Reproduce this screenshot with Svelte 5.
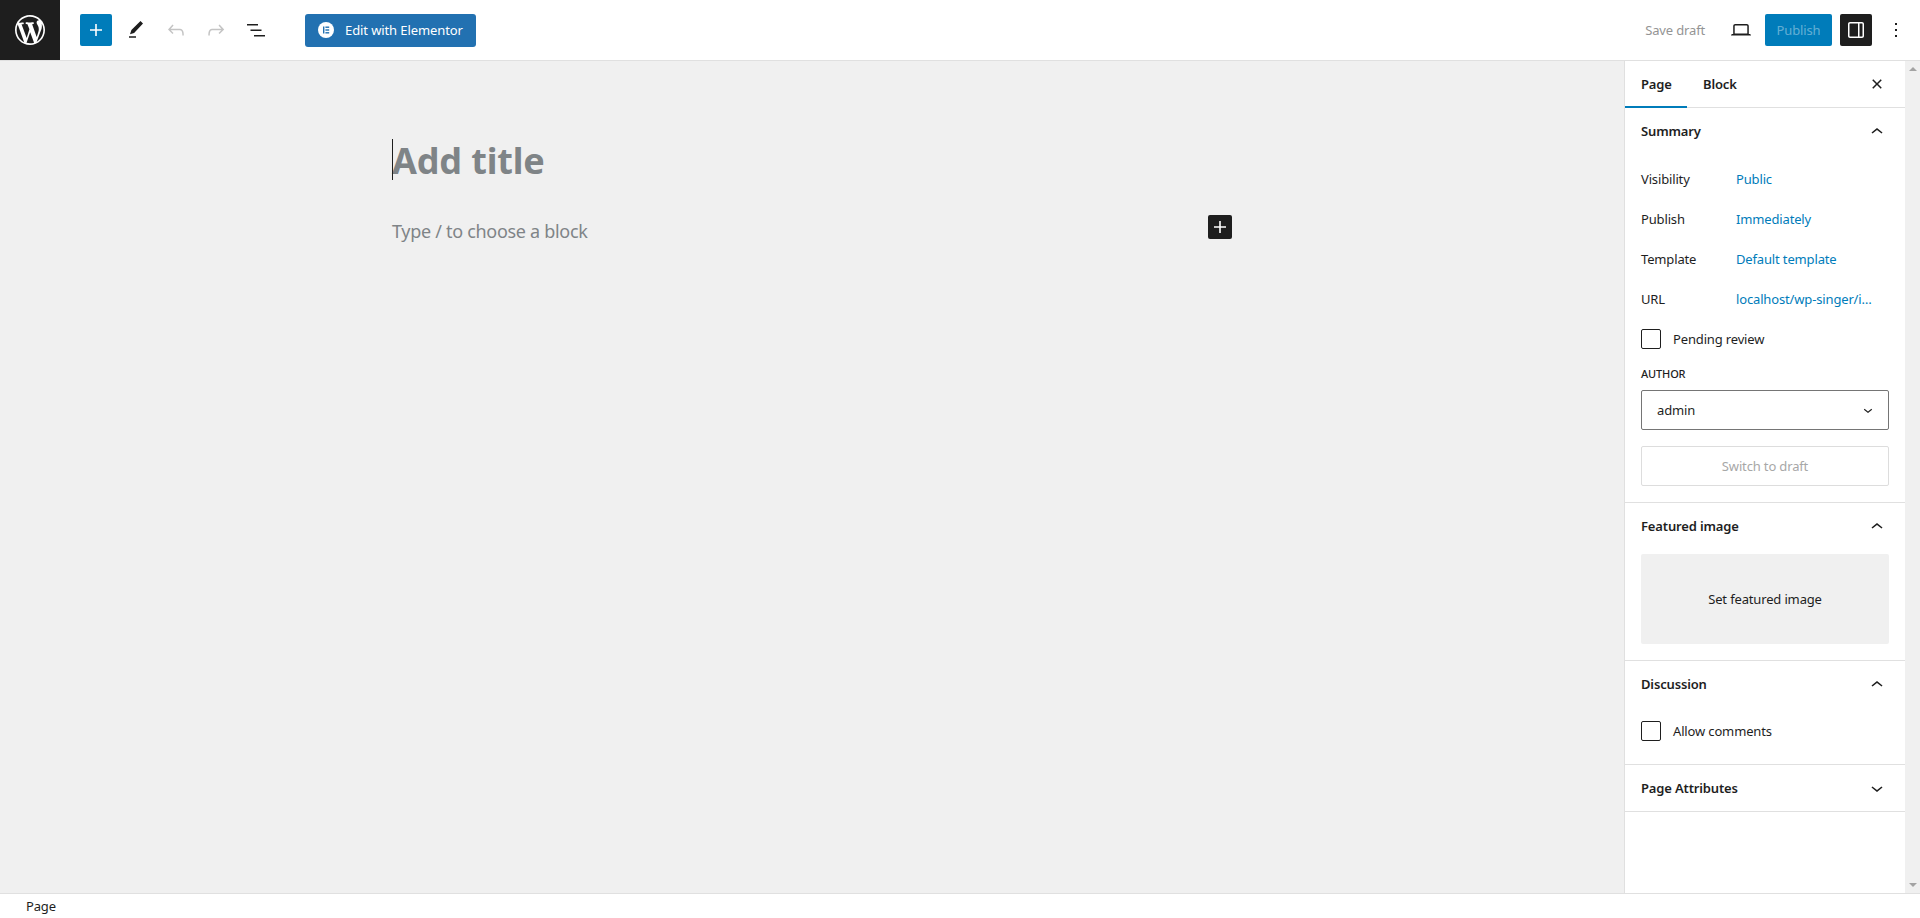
<script>
  const summaryRows = [
    ['Visibility', 'Public'],
    ['Publish', 'Immediately'],
    ['Template', 'Default template'],
    ['URL', 'localhost/wp-singer/i…']
  ];
  const chevronUp = 'M6.5 12.4L12 8l5.5 4.4-.9 1.2L12 10l-4.5 3.6-1-1.2z';
  const chevronDown = 'M17.5 11.6L12 16l-5.5-4.4.9-1.2L12 14l4.5-3.6 1 1.2z';
</script>

<div class="app">
  <header class="top">
    <a class="logo" href="#wp" aria-label="WordPress">
      <svg viewBox="-2 -2 24 24" width="36" height="36"><path fill="#fff" d="M20 10c0-5.51-4.49-10-10-10C4.48 0 0 4.49 0 10c0 5.52 4.48 10 10 10 5.51 0 10-4.48 10-10zM7.78 15.37L4.37 6.22c.55-.02 1.17-.08 1.17-.08.5-.06.44-1.13-.06-1.11 0 0-1.45.11-2.37.11-.18 0-.37 0-.58-.01C4.12 2.69 6.87 1.11 10 1.11c2.33 0 4.45.87 6.05 2.34-.68-.11-1.65.39-1.65 1.58 0 .74.45 1.36.9 2.1.35.61.55 1.36.55 2.46 0 1.49-1.4 5-1.4 5l-3.03-8.37c.54-.02.82-.17.82-.17.5-.05.44-1.25-.06-1.22 0 0-1.44.12-2.38.12-.87 0-2.33-.12-2.33-.12-.5-.03-.56 1.2-.06 1.22l.92.08 1.26 3.41zM17.41 10c.24-.64.74-1.87.43-4.25.7 1.29 1.05 2.71 1.05 4.25 0 3.29-1.73 6.24-4.4 7.78.97-2.59 1.94-5.2 2.92-7.78zM6.1 18.09C3.12 16.65 1.11 13.53 1.11 10c0-1.3.23-2.48.72-3.59C3.25 10.3 4.67 14.2 6.1 18.09zm4.03-6.63l2.58 6.98c-.86.29-1.76.45-2.71.45-.79 0-1.57-.11-2.29-.33.81-2.38 1.62-4.74 2.42-7.1z"/></svg>
    </a>
    <div class="tools">
      <button class="icon primary" aria-label="Add block"><svg viewBox="0 0 24 24" width="24" height="24"><path fill="#fff" d="M18 11.2h-5.2V6h-1.6v5.2H6v1.6h5.2V18h1.6v-5.2H18z"/></svg></button>
      <button class="icon" aria-label="Tools"><svg viewBox="0 0 24 24" width="24" height="24"><path fill="#1e1e1e" d="M19 5.5L16.5 3 7.4 12.1 6 16.2l4.1-1.3L19 5.5zM5 19.8h7v-1.5H5v1.5z"/></svg></button>
      <button class="icon" aria-label="Undo"><svg viewBox="0 0 24 24" width="24" height="24"><path fill="#c4c4c4" d="M18.3 11.7c-.6-.6-1.4-.9-2.3-.9H6.7l2.9-3.3-1.1-1-4.5 5L8.5 16l1-1-2.7-2.7H16c.5 0 .9.2 1.3.5 1 1 1 3.4 1 4.5v.3h1.5v-.2c0-1.5 0-4.3-1.5-5.7z"/></svg></button>
      <button class="icon" aria-label="Redo"><svg viewBox="0 0 24 24" width="24" height="24"><path fill="#c4c4c4" d="M15.6 6.5l-1.1 1 2.9 3.3H8c-.9 0-1.7.3-2.3.9-1.4 1.5-1.4 4.2-1.4 5.6v.2h1.5v-.3c0-1.1 0-3.5 1-4.5.3-.3.7-.5 1.3-.5h9.2L14.5 15l1.1 1.1 4.6-4.6-4.6-5z"/></svg></button>
      <button class="icon" aria-label="List view"><svg viewBox="0 0 24 24" width="24" height="24"><path fill="#1e1e1e" d="M3 6h11v1.5H3V6zm3.5 5.5h11V13h-11v-1.5zM21 17H10v1.5h11V17z"/></svg></button>
    </div>
    <button class="elementor">
      <svg viewBox="0 0 16 16" width="16" height="16"><circle cx="8" cy="8" r="8" fill="#fff"/><rect x="5" y="4.5" width="1.4" height="7" fill="#2271b1"/><rect x="7.4" y="4.5" width="3.8" height="1.4" fill="#2271b1"/><rect x="7.4" y="7.3" width="3.8" height="1.4" fill="#2271b1"/><rect x="7.4" y="10.1" width="3.8" height="1.4" fill="#2271b1"/></svg>
      <span>Edit with Elementor</span>
    </button>
    <div class="right">
      <span class="save">Save draft</span>
      <button class="icon" aria-label="Preview"><svg viewBox="0 0 24 24" width="24" height="24"><path fill="#1e1e1e" d="M20.5 16h-.7V8c0-1.1-.9-2-2-2H6.2c-1.1 0-2 .9-2 2v8h-.7c-.8 0-1.5.7-1.5 1.5h20c0-.8-.7-1.5-1.5-1.5zM5.7 8c0-.3.2-.5.5-.5h11.6c.3 0 .5.2.5.5v7.6H5.7V8z"/></svg></button>
      <button class="publish">Publish</button>
      <button class="icon dark" aria-label="Settings"><svg viewBox="0 0 24 24" width="24" height="24"><path fill="#fff" d="M18 4H6c-1.1 0-2 .9-2 2v12c0 1.1.9 2 2 2h12c1.1 0 2-.9 2-2V6c0-1.1-.9-2-2-2zm-4 14.5H6c-.3 0-.5-.2-.5-.5V6c0-.3.2-.5.5-.5h8v13zm4.5-.5c0 .3-.2.5-.5.5h-2.5v-13H18c.3 0 .5.2.5.5v12z"/></svg></button>
      <button class="icon" aria-label="Options"><svg viewBox="0 0 24 24" width="24" height="24"><path fill="#1e1e1e" d="M13 19h-2v-2h2v2zm0-6h-2v-2h2v2zm0-6h-2V5h2v2z"/></svg></button>
    </div>
  </header>

  <div class="main">
    <main class="canvas">
      <div class="doc">
        <h1 class="title"><span class="caret"></span>Add title</h1>
        <div class="para">
          <p>Type / to choose a block</p>
          <button class="inserter" aria-label="Add block"><svg viewBox="0 0 24 24" width="24" height="24"><path fill="#fff" d="M18 11.2h-5.2V6h-1.6v5.2H6v1.6h5.2V18h1.6v-5.2H18z"/></svg></button>
        </div>
      </div>
    </main>

    <aside class="side">
      <div class="tabs">
        <span class="tab active">Page</span>
        <span class="tab">Block</span>
        <button class="close" aria-label="Close"><svg viewBox="0 0 24 24" width="24" height="24"><path fill="#1e1e1e" d="M12 13.06l3.712 3.713 1.061-1.06L13.061 12l3.712-3.712-1.06-1.06L12 10.938 8.288 7.227l-1.061 1.06L10.939 12l-3.712 3.712 1.06 1.061L12 13.061z"/></svg></button>
      </div>

      <section class="panel">
        <div class="phead"><span>Summary</span><svg viewBox="0 0 24 24" width="24" height="24"><path fill="#1e1e1e" d={chevronUp}/></svg></div>
        <div class="pbody summary">
          {#each summaryRows as [k, v]}
            <div class="row"><span class="k">{k}</span><span class="v">{v}</span></div>
          {/each}
          <label class="check pending"><span class="box"></span>Pending review</label>
          <div class="author-label">AUTHOR</div>
          <div class="select"><span>admin</span><svg viewBox="0 0 24 24" width="18" height="18"><path fill="#1e1e1e" d={chevronDown}/></svg></div>
          <button class="switch">Switch to draft</button>
        </div>
      </section>

      <section class="panel">
        <div class="phead"><span>Featured image</span><svg viewBox="0 0 24 24" width="24" height="24"><path fill="#1e1e1e" d={chevronUp}/></svg></div>
        <div class="pbody featured"><div class="image">Set featured image</div></div>
      </section>

      <section class="panel">
        <div class="phead"><span>Discussion</span><svg viewBox="0 0 24 24" width="24" height="24"><path fill="#1e1e1e" d={chevronUp}/></svg></div>
        <div class="pbody discussion"><label class="check"><span class="box"></span>Allow comments</label></div>
      </section>

      <section class="panel last">
        <div class="phead"><span>Page Attributes</span><svg viewBox="0 0 24 24" width="24" height="24"><path fill="#1e1e1e" d={chevronDown}/></svg></div>
      </section>
    </aside>

    <div class="scroll">
      <span class="arrow up"></span>
      <span class="arrow down"></span>
    </div>
  </div>

  <footer class="foot">Page</footer>
</div>

<style>
  :global(body) { margin: 0; background: #fff; }
  * { box-sizing: border-box; }
  .app {
    height: 918px; display: flex; flex-direction: column; overflow: hidden;
    font-family: "Noto Sans", "Open Sans", sans-serif; font-size: 13px; color: #1e1e1e; letter-spacing: -0.15px;
  }
  button { font: inherit; letter-spacing: inherit; border: 0; padding: 0; background: none; color: inherit; }
  svg { display: block; flex: none; }

  .top { height: 61px; flex: none; display: flex; align-items: center; background: #fff; border-bottom: 1px solid #e0e0e0; }
  .logo { width: 60px; height: 60px; background: #1e1e1e; display: flex; align-items: center; justify-content: center; }
  .tools { display: flex; gap: 8px; margin-left: 20px; }
  .icon { width: 32px; height: 32px; display: flex; align-items: center; justify-content: center; border-radius: 2px; }
  .primary { background: #007cba; }
  .dark { background: #1e1e1e; }
  .elementor {
    margin-left: 33px; width: 171px; height: 33px; display: flex; align-items: center; gap: 11px; padding-left: 13px;
    background: #2271b1; color: #fff; border-radius: 3px; white-space: nowrap; letter-spacing: -0.1px;
  }
  .right { margin-left: auto; display: flex; align-items: center; gap: 8px; padding-right: 8px; }
  .save { color: #949494; margin-right: 12px; }
  .publish { width: 67px; height: 32px; background: #007cba; color: rgba(255,255,255,.4); border-radius: 2px; }

  .main { flex: 1; min-height: 0; display: flex; background: #f0f0f0; }
  .canvas { flex: 1; min-width: 0; }
  .doc { width: 840px; margin: 0 0 0 392px; padding-top: 51px; }
  .title { position: relative; margin: 0; height: 98px; font-size: 36px; line-height: 98px; font-weight: 700; color: #7f8487; letter-spacing: -0.15px; }
  .caret { position: absolute; left: 0; top: 27px; width: 1px; height: 41px; background: #1e1e1e; }
  .para { position: relative; height: 40px; }
  .para p { margin: 0; font-size: 18px; line-height: 42px; color: #7f8487; letter-spacing: -0.3px; }
  .inserter { position: absolute; left: 816px; top: 5px; width: 24px; height: 24px; background: #1e1e1e; border-radius: 2px; }

  .side { width: 281px; flex: none; background: #fff; border-left: 1px solid #e0e0e0; }
  .tabs { height: 47px; display: flex; align-items: stretch; border-bottom: 1px solid #e0e0e0; position: relative; font-weight: 600; }
  .tab { display: flex; align-items: center; padding: 0 16px; position: relative; }
  .tab.active { width: 62px; }
  .tab.active::after { content: ""; position: absolute; left: 0; right: 0; bottom: -1px; height: 2px; background: #007cba; }
  .close { position: absolute; right: 12px; top: 7px; width: 32px; height: 32px; display: flex; align-items: center; justify-content: center; }
  .panel { border-bottom: 1px solid #e0e0e0; }
  .phead { height: 47px; padding: 0 16px; display: flex; align-items: center; justify-content: space-between; font-weight: 600; }
  .phead span { position: relative; top: -1px; }
  .last .phead { height: 46px; }
  .last .phead span { top: 0; }
  .pbody { padding: 0 16px 16px; }
  .summary { padding-top: 4px; }
  .row { display: flex; height: 40px; align-items: center; }
  .k { width: 95px; }
  .v { color: #007cba; white-space: nowrap; }
  .check { display: flex; align-items: center; gap: 12px; height: 20px; }
  .box { width: 20px; height: 20px; border: 1px solid #1e1e1e; border-radius: 2px; background: #fff; flex: none; }
  .pending { margin-top: 10px; }
  .author-label { margin-top: 16px; font-size: 11px; font-weight: 500; line-height: 18px; }
  .select { margin-top: 7px; height: 40px; display: flex; align-items: center; justify-content: space-between; padding: 0 11px 0 15px; border: 1px solid #757575; border-radius: 2px; }
  .switch { display: block; margin-top: 16px; width: 100%; height: 40px; border: 1px solid #ddd; border-radius: 2px; color: #a7a7a7; background: #fff; }
  .featured { padding-top: 4px; }
  .image { height: 90px; display: flex; align-items: center; justify-content: center; background: #f0f0f0; border-radius: 2px; }
  .discussion { padding-top: 13px; padding-bottom: 23px; }

  .scroll { width: 15px; flex: none; display: flex; flex-direction: column; justify-content: space-between; align-items: center; padding: 6px 0; background: #f0f0f0; }
  .arrow { width: 0; height: 0; border-left: 4px solid transparent; border-right: 4px solid transparent; }
  .up { border-bottom: 4px solid #a3a3a3; }
  .down { border-top: 4px solid #a3a3a3; }

  .foot { height: 25px; flex: none; display: flex; align-items: center; padding-left: 26px; background: #fff; border-top: 1px solid #e0e0e0; }
</style>
